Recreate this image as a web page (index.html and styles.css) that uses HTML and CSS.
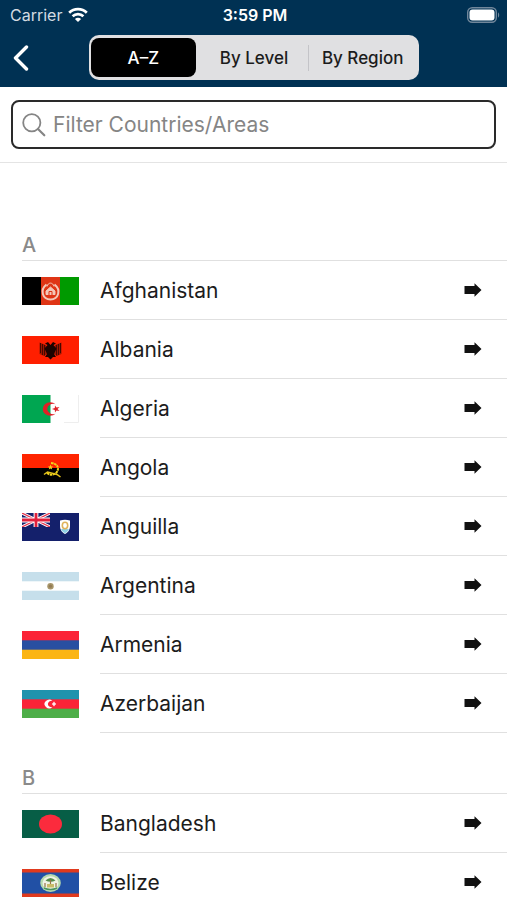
FILE: index.html
```html
<!DOCTYPE html>
<html lang="en">
<head>
    <meta charset="UTF-8">
    <meta name="viewport" content="width=device-width, initial-scale=1.0">
    <title>Countries/Areas</title>
    <link rel="stylesheet" href="styles.css">
</head>
<body>

    <!-- arrow shared by all the rows -->
    <svg class="defs" width="0" height="0" aria-hidden="true">
        <symbol id="arrow" viewBox="0 0 18 14">
            <path d="M0.5 3H10.5V0.3L17.5 7L10.5 13.700V11H0.5Z" fill="#111"/>
        </symbol>
    </svg>

    <header class="top">
        <div class="status">
            <div class="carrier">
                <span>Carrier</span>
                <svg width="20" height="16" viewBox="0 0 20 16" fill="none" stroke="#fff" stroke-width="2.7" aria-hidden="true">
                    <path d="M1.2 5.8C6 0.9 14 0.9 18.8 5.8"/>
                    <path d="M4.6 9.3C7.6 6.4 12.4 6.4 15.4 9.3"/>
                    <path d="M10 15L6.9 11.9C8.6 10.3 11.4 10.3 13.1 11.9Z" fill="#fff" stroke="none"/>
                </svg>
            </div>
            <time class="clock">3:59 PM</time>
            <svg class="battery" width="33" height="16" viewBox="0 0 33 16" aria-hidden="true">
                <rect x="0.7" y="0.7" width="28.6" height="14.6" rx="4.5" fill="none" stroke="#71879b" stroke-width="1.4"/>
                <rect x="2.5" y="2.5" width="25" height="11" rx="3" fill="#fff"/>
                <path d="M31 5.5C32.6 6 32.6 10 31 10.5Z" fill="#71879b"/>
            </svg>
        </div>
        <nav class="navbar">
            <button type="button" class="back" aria-label="Back">
                <svg width="17" height="26" viewBox="0 0 17 26" fill="none" stroke="#fff" stroke-width="3.4" stroke-linecap="round" stroke-linejoin="round">
                    <path d="M13.5 2L2.5 13L13.5 24"/>
                </svg>
            </button>
            <div class="segments">
                <button type="button" class="segment active">A–Z</button>
                <button type="button" class="segment">By Level</button>
                <button type="button" class="segment divided">By Region</button>
            </div>
        </nav>
    </header>

    <form class="search" role="search">
        <label class="search-box" for="filter">
            <svg width="24" height="24" viewBox="0 0 24 24" fill="none" stroke="#858585" stroke-width="1.8" stroke-linecap="round" aria-hidden="true">
                <circle cx="9.8" cy="9.8" r="8.6"/>
                <path d="M16 16L22.3 22.3" stroke-width="2.2"/>
            </svg>
            <input type="text" id="filter" placeholder="Filter Countries/Areas" aria-label="Filter Countries/Areas">
        </label>
    </form>

    <main>
        <section class="first">
            <h2>A</h2>
            <ul>
                <li>
                    <a href="#afghanistan">
                        <svg class="flag" viewBox="0 0 57 28">
                            <rect width="19" height="28" fill="#000"/>
                            <rect x="19" width="19" height="28" fill="#df3515"/>
                            <rect x="38" width="19" height="28" fill="#009a00"/>
                            <g fill="none" stroke="#f4c8b8">
                                <path d="M24.5 7.5C17.5 13 20.5 22.5 28.5 22.5C36.5 22.5 39.5 13 32.5 7.5" stroke-width="2"/>
                                <path d="M25 9.5C26 5 31 5 32 9.5" stroke-width="1"/>
                                <path d="M24 17.5V14L28.5 10L33 14V17.5Z" fill="#f4c8b8"/>
                                <path d="M27 18V14.5H30V18M24 19.5H33" stroke="#df3515" stroke-width="1"/>
                            </g>
                        </svg>
                        <span class="name">Afghanistan <svg class="arrow"><use href="#arrow"/></svg></span>
                    </a>
                </li>
                <li>
                    <a href="#albania">
                        <svg class="flag" viewBox="0 0 57 28">
                            <rect width="57" height="28" fill="#ff1f00"/>
                            <path d="M24 9L17.5 6.5V18L22 20L25 18ZM33 9L39.5 6.5V18L35 20L32 18Z" fill="#9c1600"/>
                            <path d="M18.5 7V17M20.5 8V19M22.5 9V19.5M34.5 9V19.5M36.5 8V19M38.5 7V17" stroke="#3b0700" stroke-width="0.9"/>
                            <path d="M28.5 9L26 6L23 7.5L25.5 9L22.5 12.5L25 18L23 21H26L28.5 23.5L31 21H34L32 18L34.5 12.5L31.5 9L34 7.5L31 6Z" fill="#1c0300"/>
                        </svg>
                        <span class="name">Albania <svg class="arrow"><use href="#arrow"/></svg></span>
                    </a>
                </li>
                <li>
                    <a href="#algeria">
                        <svg class="flag" viewBox="0 0 57 28">
                            <rect width="57" height="28" fill="#fff"/>
                            <rect width="28.5" height="28" fill="#00a651"/>
                            <path d="M56.5 0V27.5H42" fill="none" stroke="#eee"/>
                            <path d="M33.5 9.2A7.5 6.8 0 1 0 33.5 18.8A6 5.2 0 1 1 33.5 9.2Z" fill="#e01f26"/>
                            <path d="M30 14L32.8 13L33 10.5L34.5 12.6L37.5 12L35.5 14L37.5 16L34.5 15.4L33 17.5L32.8 15Z" fill="#e01f26"/>
                        </svg>
                        <span class="name">Algeria <svg class="arrow"><use href="#arrow"/></svg></span>
                    </a>
                </li>
                <li>
                    <a href="#angola">
                        <svg class="flag" viewBox="0 0 57 28">
                            <rect width="57" height="28" fill="#000"/>
                            <rect width="57" height="14" fill="#ff2400"/>
                            <path d="M29 9C36 9.5 37.5 15 34.5 18.5C31.5 21.5 27 21 25 19" fill="none" stroke="#f0d51c" stroke-width="2" stroke-dasharray="2.5 0.6"/>
                            <path d="M22 20.5L25.5 18L35 20.5L38.5 23" fill="none" stroke="#e5c21b" stroke-width="1.5"/>
                            <path d="M28.5 10.5L29.3 12.5H31.2L29.7 13.7L30.2 15.5L28.5 14.4L26.8 15.5L27.3 13.7L25.8 12.5H27.7Z" fill="#f0d51c"/>
                        </svg>
                        <span class="name">Angola <svg class="arrow"><use href="#arrow"/></svg></span>
                    </a>
                </li>
                <li>
                    <a href="#anguilla">
                        <svg class="flag" viewBox="0 0 57 28">
                            <rect width="57" height="28" fill="#14206b"/>
                            <svg width="28" height="14" viewBox="0 0 28 14">
                                <path d="M0 0L28 14M28 0L0 14" stroke="#fff" stroke-width="3"/>
                                <path d="M0 0L28 14M28 0L0 14" stroke="#e8334a" stroke-width="1.2"/>
                                <path d="M14 0V14M0 7H28" stroke="#fff" stroke-width="4.8"/>
                                <path d="M14 0V14M0 7H28" stroke="#e0203c" stroke-width="2.8"/>
                            </svg>
                            <path d="M38 7.5Q43 6 48 7.5V13C48 17.5 45.5 19.5 43 21C40.5 19.5 38 17.5 38 13Z" fill="#fff"/>
                            <path d="M39 16H47C46 18.5 44.5 19.5 43 20.2C41.5 19.5 40 18.5 39 16Z" fill="#8fd1e6"/>
                            <ellipse cx="43" cy="12.5" rx="2.7" ry="3.2" fill="none" stroke="#dfb35d" stroke-width="1.6"/>
                        </svg>
                        <span class="name">Anguilla <svg class="arrow"><use href="#arrow"/></svg></span>
                    </a>
                </li>
                <li>
                    <a href="#argentina">
                        <svg class="flag" viewBox="0 0 57 28">
                            <rect width="57" height="28" fill="#c6dfeb"/>
                            <rect y="9.3" width="57" height="9.4" fill="#fff"/>
                            <circle cx="28.5" cy="14.2" r="3.2" fill="#a79569"/>
                            <circle cx="28.5" cy="14.2" r="1.6" fill="#937b55"/>
                        </svg>
                        <span class="name">Argentina <svg class="arrow"><use href="#arrow"/></svg></span>
                    </a>
                </li>
                <li>
                    <a href="#armenia">
                        <svg class="flag" viewBox="0 0 57 28">
                            <rect width="57" height="10" fill="#fb2337"/>
                            <rect y="9.3" width="57" height="10" fill="#294fa1"/>
                            <rect y="18.7" width="57" height="9.3" fill="#fbb514"/>
                        </svg>
                        <span class="name">Armenia <svg class="arrow"><use href="#arrow"/></svg></span>
                    </a>
                </li>
                <li>
                    <a href="#azerbaijan">
                        <svg class="flag" viewBox="0 0 57 28">
                            <rect width="57" height="10" fill="#2093ad"/>
                            <rect y="9.3" width="57" height="10" fill="#fb2337"/>
                            <rect y="18.7" width="57" height="9.3" fill="#4dae48"/>
                            <path d="M30.5 10.8A4.8 4.2 0 1 0 30.5 17.2A3.7 3.3 0 1 1 30.5 10.8Z" fill="#fff"/>
                            <path d="M32 11.8L32.6 13.2L34 14L32.6 14.8L32 16.2L31.4 14.8L30 14L31.4 13.2Z" fill="#fff" stroke="#fff" stroke-width="0.5"/>
                        </svg>
                        <span class="name">Azerbaijan <svg class="arrow"><use href="#arrow"/></svg></span>
                    </a>
                </li>
            </ul>
        </section>

        <section>
            <h2>B</h2>
            <ul>
                <li>
                    <a href="#bangladesh">
                        <svg class="flag" viewBox="0 0 57 28">
                            <rect width="57" height="28" fill="#075e46"/>
                            <ellipse cx="28.5" cy="14" rx="11.5" ry="9.5" fill="#fb2b3d"/>
                        </svg>
                        <span class="name">Bangladesh <svg class="arrow"><use href="#arrow"/></svg></span>
                    </a>
                </li>
                <li>
                    <a href="#belize">
                        <svg class="flag" viewBox="0 0 57 28">
                            <rect width="57" height="28" fill="#e03a1e"/>
                            <rect y="3.5" width="57" height="21" fill="#2150a5"/>
                            <ellipse cx="28.5" cy="14" rx="10.3" ry="9" fill="#b5d9ae"/>
                            <ellipse cx="28.5" cy="14" rx="8" ry="6.8" fill="#f0f3e4"/>
                            <path d="M23.5 11.5Q28.5 6.5 33.5 11.5Q28.5 14 23.5 11.5Z" fill="#558c4b"/>
                            <path d="M28.5 11V17M23 14V18M34 14V18" stroke="#97734a" stroke-width="1.2"/>
                            <path d="M25 15H32V18.5H25Z" fill="#c9bc67"/>
                            <path d="M22 19Q28.5 22 35 19" fill="none" stroke="#4b9560" stroke-width="1.5"/>
                        </svg>
                        <span class="name">Belize <svg class="arrow"><use href="#arrow"/></svg></span>
                    </a>
                </li>
            </ul>
        </section>
    </main>

</body>
</html>
```

FILE: styles.css
```css
* {
    margin: 0;
    padding: 0;
    box-sizing: border-box;
}

body {
    font-family: Inter, "Liberation Sans", sans-serif;
    background-color: #fff;
    color: #1c1c1c;
    overflow-x: hidden;
}

button,
input {
    font-family: inherit;
    border: none;
    background: none;
}

.defs {
    display: none;
}

/* status bar and navigation */
.top {
    height: 87px;
    background-color: #003153;
}

.status {
    display: grid;
    grid-template-columns: 1fr auto 1fr;
    align-items: center;
    height: 30px;
    padding: 0 7px 0 10px;
    font-size: 16px;
    color: #fff;
}

.carrier {
    display: flex;
    align-items: center;
    gap: 6px;
    color: #d3dbe2;
}

.clock {
    font-weight: 600;
}

.battery {
    justify-self: end;
}

.navbar {
    display: grid;
    grid-template-columns: 89px 1fr 88px;
    padding-top: 5px;
}

.back {
    display: flex;
    align-items: center;
    padding-left: 13px;
    cursor: pointer;
}

.segments {
    display: grid;
    grid-template-columns: repeat(3, 1fr);
    height: 45px;
    padding: 3px 2px;
    border-radius: 10px;
    background-color: #e0e0e2;
}

.segment {
    font-size: 17px;
    font-weight: 500;
    color: #1c1c1c;
    white-space: nowrap;
    cursor: pointer;
}

.segment.active {
    margin-right: 4px;
    border-radius: 8px;
    background-color: #000;
    color: #fff;
}

.segment.divided {
    background: linear-gradient(#c4c4c8, #c4c4c8) left center / 1px 26px no-repeat;
}

/* filter box */
.search {
    padding: 13px 11px;
    border-bottom: 1px solid #e4e4e4;
}

.search-box {
    display: flex;
    align-items: center;
    gap: 7px;
    height: 49px;
    padding: 0 9px;
    border: 2px solid #2a2a2a;
    border-radius: 8px;
}

.search-box input {
    flex: 1;
    min-width: 0;
    font-size: 21px;
    outline: none;
}

.search-box input::placeholder {
    color: #858585;
}

/* list of countries */
h2 {
    display: flex;
    align-items: flex-end;
    height: 61px;
    margin-left: 22px;
    padding-bottom: 3px;
    border-bottom: 1px solid #e0e0e0;
    font-size: 20px;
    font-weight: 500;
    line-height: 24px;
    color: #8a8a8a;
}

.first {
    padding-top: 37px;
}

ul {
    list-style: none;
}

li a {
    display: flex;
    align-items: center;
    gap: 21px;
    padding-left: 22px;
    color: inherit;
    text-decoration: none;
}

.flag {
    flex: none;
    width: 57px;
    height: 28px;
}

.name {
    flex: 1;
    display: flex;
    justify-content: space-between;
    align-items: center;
    height: 59px;
    padding-right: 25px;
    border-bottom: 1px solid #e0e0e0;
    font-size: 21px;
}

.arrow {
    width: 18px;
    height: 14px;
}
```
